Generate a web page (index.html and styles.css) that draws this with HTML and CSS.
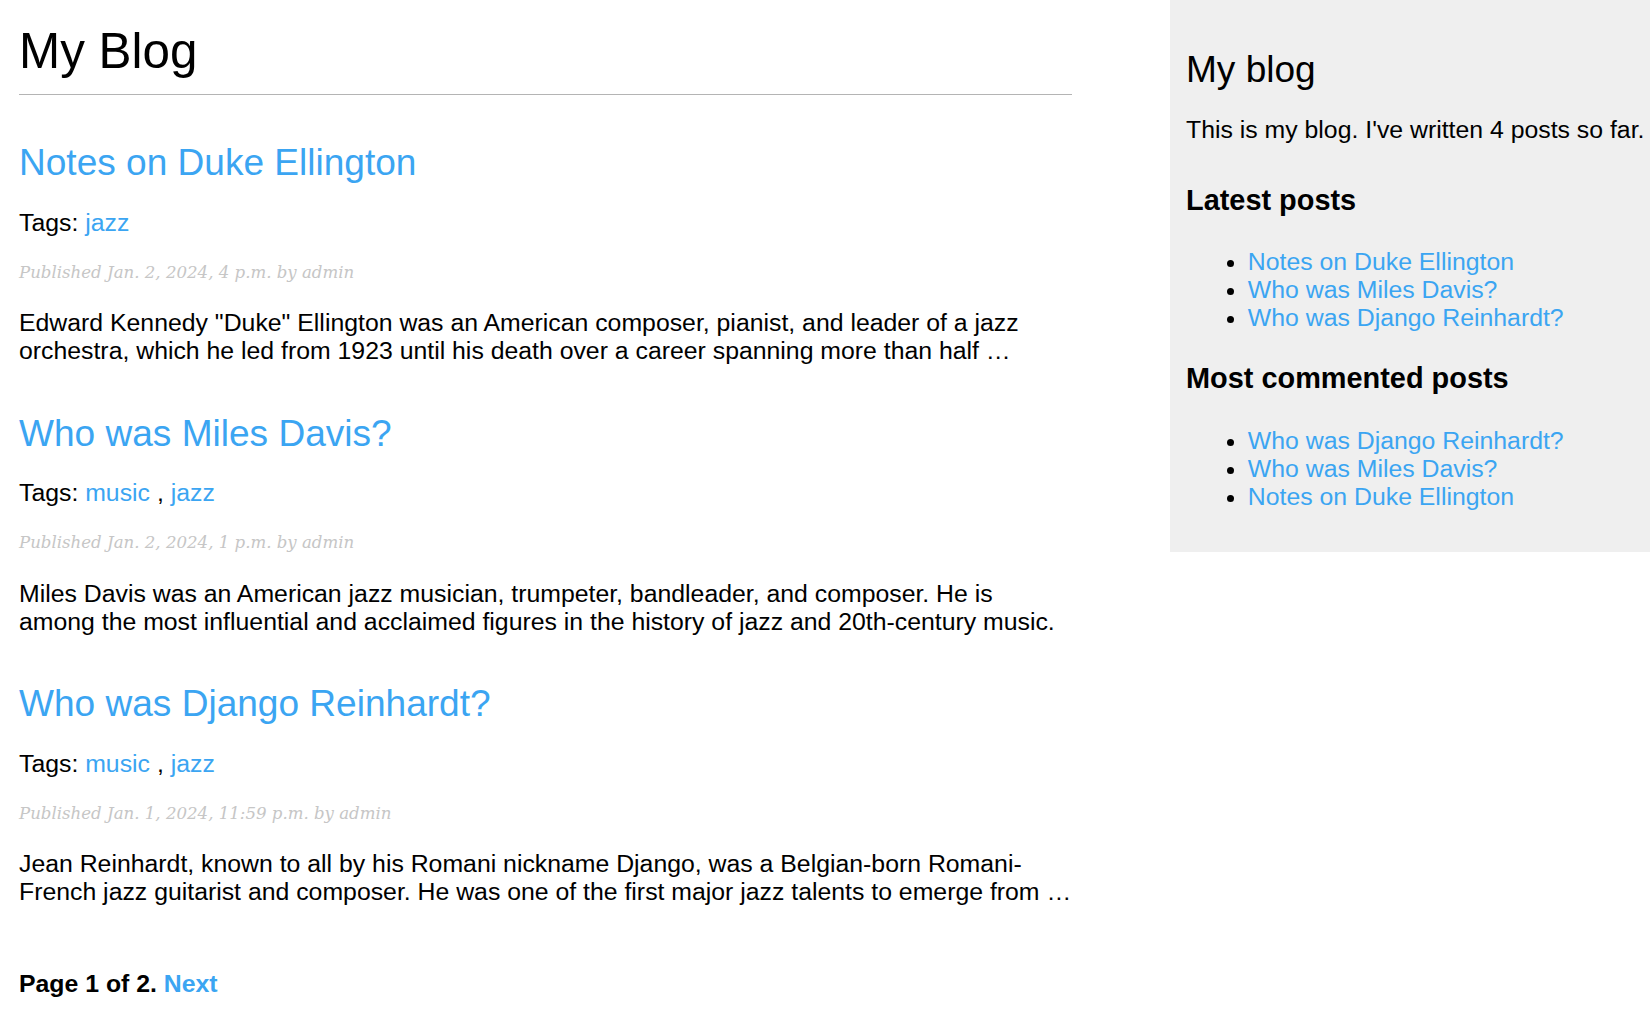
FILE: index.html
```html
<!DOCTYPE html>
<html lang="en">
<head>
<meta charset="utf-8">
<title>My Blog</title>
<link rel="stylesheet" href="styles.css">
</head>
<body>
<div class="page">
  <main class="content">
    <h1 class="site-title">My Blog</h1>

    <article class="post">
      <h2 class="post-title"><a href="#">Notes on Duke Ellington</a></h2>
      <p class="tags">Tags: <a href="#">jazz</a></p>
      <p class="date">Published Jan. 2, 2024, 4 p.m. by admin</p>
      <p class="excerpt">Edward Kennedy "Duke" Ellington was an American composer, pianist, and leader of a jazz orchestra, which he led from 1923 until his death over a career spanning more than half …</p>
    </article>

    <article class="post">
      <h2 class="post-title"><a href="#">Who was Miles Davis?</a></h2>
      <p class="tags">Tags: <a href="#">music</a> , <a href="#">jazz</a></p>
      <p class="date">Published Jan. 2, 2024, 1 p.m. by admin</p>
      <p class="excerpt">Miles Davis was an American jazz musician, trumpeter, bandleader, and composer. He is among the most influential and acclaimed figures in the history of jazz and 20th-century music.</p>
    </article>

    <article class="post">
      <h2 class="post-title"><a href="#">Who was Django Reinhardt?</a></h2>
      <p class="tags">Tags: <a href="#">music</a> , <a href="#">jazz</a></p>
      <p class="date">Published Jan. 1, 2024, 11:59 p.m. by admin</p>
      <p class="excerpt">Jean Reinhardt, known to all by his Romani nickname Django, was a Belgian-born Romani-French jazz guitarist and composer. He was one of the first major jazz talents to emerge from …</p>
    </article>

    <div class="pagination">
      <span class="current">Page 1 of 2.</span>
      <a href="#">Next</a>
    </div>
  </main>

  <aside class="sidebar">
    <h2 class="side-title">My blog</h2>
    <p class="side-intro">This is my blog. I've written 4 posts so far.</p>
    <h3 class="side-heading">Latest posts</h3>
    <ul class="side-list">
      <li><a href="#">Notes on Duke Ellington</a></li>
      <li><a href="#">Who was Miles Davis?</a></li>
      <li><a href="#">Who was Django Reinhardt?</a></li>
    </ul>
    <h3 class="side-heading">Most commented posts</h3>
    <ul class="side-list">
      <li><a href="#">Who was Django Reinhardt?</a></li>
      <li><a href="#">Who was Miles Davis?</a></li>
      <li><a href="#">Notes on Duke Ellington</a></li>
    </ul>
  </aside>
</div>
</body>
</html>
```

FILE: styles.css
```css
html, body {
  margin: 0;
  padding: 0;
  background: #ffffff;
}

body {
  font-family: "Liberation Sans", Arial, Helvetica, sans-serif;
  font-size: 24.82px;
  color: #000;
  overflow: hidden;
}

a {
  color: #3ba5f2;
  text-decoration: none;
}

.page {
  display: flex;
  align-items: flex-start;
}

.content {
  flex: 0 0 1053px;
  margin-left: 19px;
}

.site-title {
  font-size: 49.4px;
  font-weight: normal;
  margin: 22px 0 0;
  padding: 0 0 15px;
  border-bottom: 1px solid #b4b4b4;
}

.post-title {
  font-size: 37.05px;
  font-weight: normal;
  margin: 46.3px 0 0;
}

.tags {
  margin: 24.7px 0;
}

.date {
  font-family: "DejaVu Serif", Georgia, serif;
  font-style: italic;
  font-size: 16.6px;
  line-height: 22px;
  color: #c6c6c6;
  margin: 25px 0 25.5px;
}

.excerpt {
  margin: 0;
}

.pagination {
  margin: 64px 0 0;
  font-weight: bold;
}

.sidebar {
  margin-left: auto;
  flex: 0 0 480px;
  box-sizing: border-box;
  padding: 15.4px 0 15.4px 16px;
  background: #efefef;
  white-space: nowrap;
}

.side-title {
  font-size: 37.05px;
  font-weight: normal;
  margin: 32.5px 0 0;
}

.side-intro {
  margin: 24.7px 0 40px;
}

.side-heading {
  font-size: 28.9px;
  font-weight: bold;
  margin: 30px 0 0;
}

.side-list {
  margin: 31.5px 0 26px;
  padding-left: 61.8px;
}
```
